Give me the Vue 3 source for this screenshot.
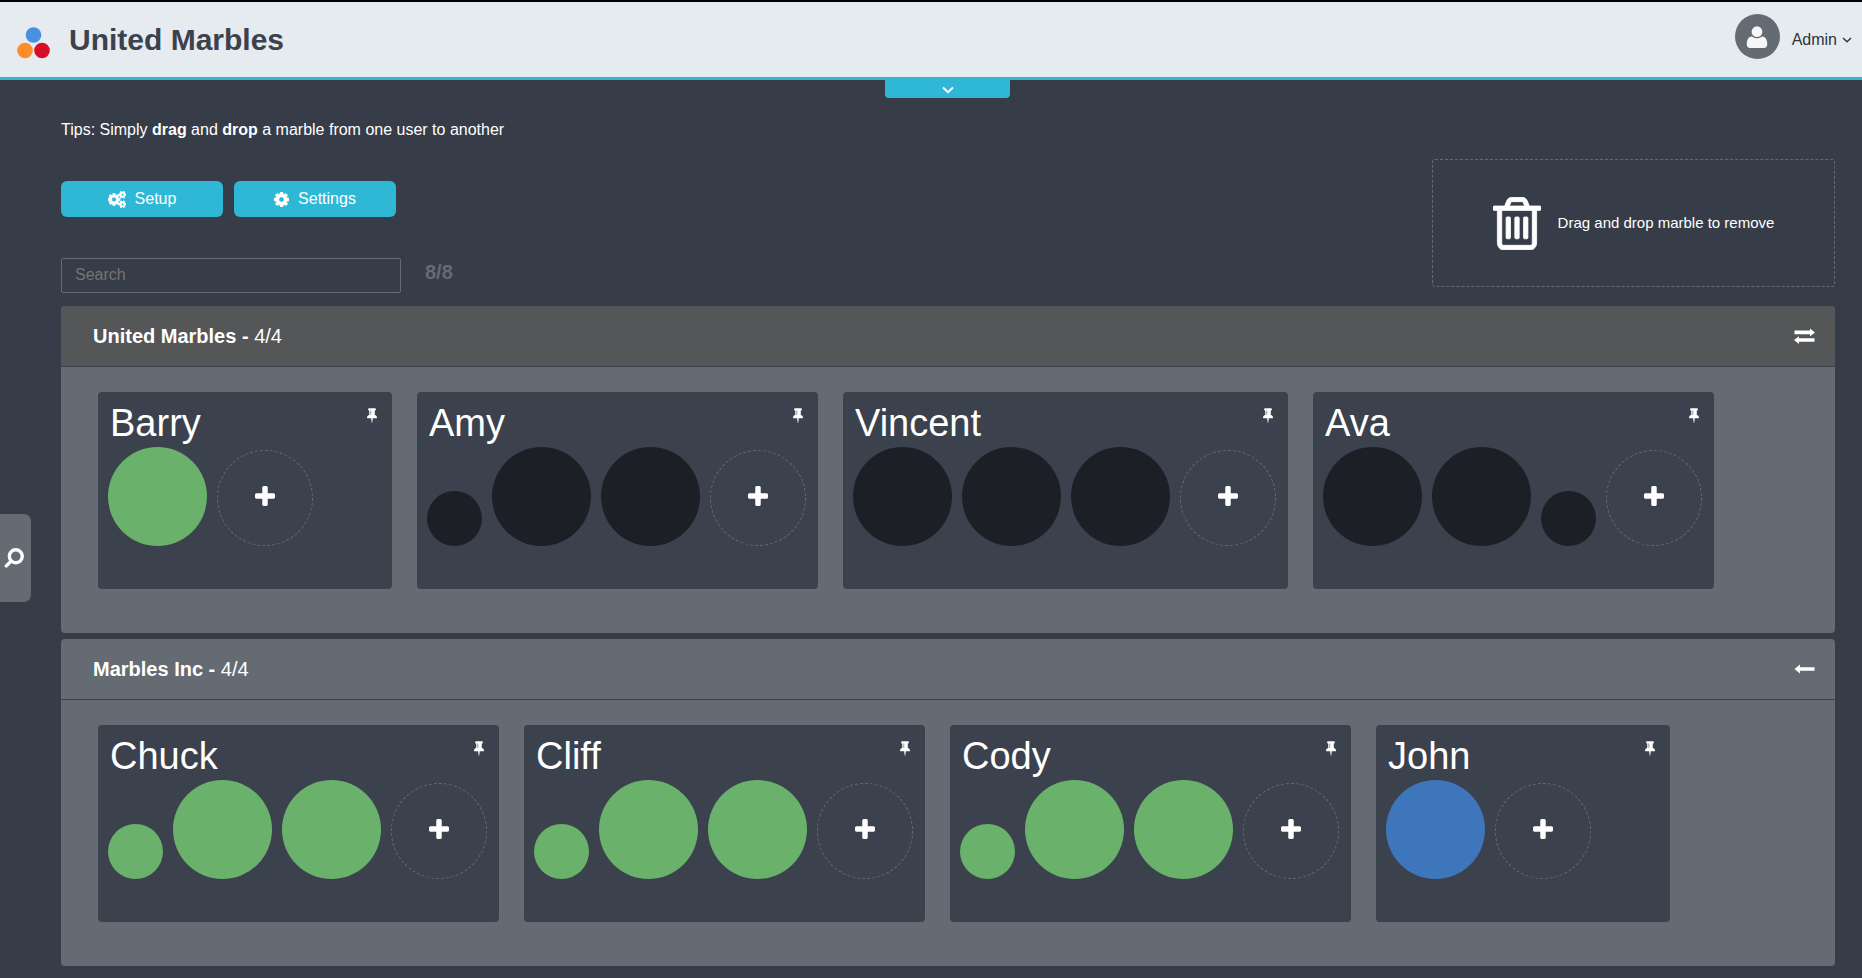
<script setup>
import { ref, computed } from 'vue'

const query = ref('')

const groups = [
  {
    name: 'United Marbles',
    own: true,
    members: [
      { name: 'Barry', marbles: ['green'] },
      { name: 'Amy', marbles: ['dark small', 'dark', 'dark'] },
      { name: 'Vincent', marbles: ['dark', 'dark', 'dark'] },
      { name: 'Ava', marbles: ['dark', 'dark', 'dark small'] },
    ],
  },
  {
    name: 'Marbles Inc',
    own: false,
    members: [
      { name: 'Chuck', marbles: ['green small', 'green', 'green'] },
      { name: 'Cliff', marbles: ['green small', 'green', 'green'] },
      { name: 'Cody', marbles: ['green small', 'green', 'green'] },
      { name: 'John', marbles: ['blue'] },
    ],
  },
]

const total = groups.reduce((n, g) => n + g.members.length, 0)

const visibleGroups = computed(() =>
  groups.map((g) => ({
    ...g,
    shown: g.members.filter((m) => m.name.toLowerCase().includes(query.value.toLowerCase())),
  }))
)
const visibleCount = computed(() => visibleGroups.value.reduce((n, g) => n + g.shown.length, 0))
</script>

<template>
  <div class="page">
    <header class="topbar">
      <svg class="logo" viewBox="0 0 34 38" aria-hidden="true">
        <circle cx="16.500" cy="14" r="7.800" fill="#4a90e2" />
        <circle cx="8" cy="29.500" r="7.800" fill="#ff8c2b" />
        <circle cx="25" cy="29.500" r="7.800" fill="#d50f29" />
      </svg>
      <h1>United Marbles</h1>
      <button class="account" type="button">
        <span class="avatar">
          <svg viewBox="0 0 22 22" aria-hidden="true">
            <path d="M6 10.400 Q11 14.200 16 10.400 C20 10.600 21.300 14.500 21.300 18 C21.300 20.400 20 22 17.800 22 H4.200 C2 22 0.700 20.400 0.700 18 C0.700 14.500 2 10.600 6 10.400 Z" />
            <circle cx="11" cy="5.700" r="5.400" />
          </svg>
        </span>
        <span>Admin</span>
        <svg class="caret" viewBox="0 0 10 6" aria-hidden="true"><path d="M1 1 L5 4.800 L9 1" /></svg>
      </button>
    </header>
    <button class="drawer" type="button" aria-label="Show more">
      <svg viewBox="0 0 12 8" aria-hidden="true"><path d="M1 1.500 L6 6.200 L11 1.500" /></svg>
    </button>

    <button class="side-search" type="button" aria-label="Open search">
      <svg viewBox="0 0 20 20" aria-hidden="true">
        <circle cx="11.800" cy="8.300" r="6.500" />
        <path d="M7.200 13 L2.300 17.900" />
      </svg>
    </button>

    <main>
      <section class="toolbar">
        <div>
          <p class="tips">Tips: Simply <b>drag</b> and <b>drop</b> a marble from one user to another</p>
          <div class="actions">
            <button class="action" type="button">
              <svg class="cogs" viewBox="0 0 1920 1792" aria-hidden="true"><path d="M896 896q0-106-75-181t-181-75-181 75-75 181 75 181 181 75 181-75 75-181zm768 512q0-52-38-90t-90-38-90 38-38 90q0 53 37.500 90.500t90.500 37.500 90.500-37.500 37.500-90.500zm0-1024q0-52-38-90t-90-38-90 38-38 90q0 53 37.500 90.500t90.500 37.500 90.500-37.500 37.500-90.500zm-384 421v185q0 10-7 19.500t-16 10.500l-155 24q-11 35-32 76 34 48 90 115 7 11 7 20 0 12-7 19-23 30-82.500 89.500t-78.500 59.500q-11 0-21-7l-115-90q-37 19-77 31-11 108-23 155-7 24-30 24h-186q-11 0-20-7.500t-10-17.500l-23-153q-34-10-75-31l-118 89q-7 7-20 7-11 0-21-8-144-133-144-160 0-9 7-19 10-14 41-53t47-61q-23-44-35-82l-152-24q-10-1-17-9.500t-7-19.500v-185q0-10 7-19.500t16-10.500l155-24q11-35 32-76-34-48-90-115-7-11-7-20 0-12 7-20 22-30 82-89t79-59q11 0 21 7l115 90q34-18 77-32 11-108 23-154 7-24 30-24h186q11 0 20 7.500t10 17.500l23 153q34 10 75 31l118-89q8-7 20-7 11 0 21 8 144 133 144 160 0 8-7 19-12 16-42 54t-45 60q23 48 34 82l152 23q10 2 17 10.500t7 19.500zm640 533v140q0 16-149 31-12 27-30 52 51 113 51 138 0 4-4 7-122 71-124 71-8 0-46-47t-52-68q-20 2-30 2t-30-2q-14 21-52 68t-46 47q-2 0-124-71-4-3-4-7 0-25 51-138-18-25-30-52-149-15-149-31v-140q0-16 149-31 13-29 30-52-51-113-51-138 0-4 4-7 4-2 35-20t59-34 30-16q8 0 46 46.500t52 67.500q20-2 30-2t30 2q51-71 92-112l6-2q4 0 124 70 4 3 4 7 0 25-51 138 17 23 30 52 149 15 149 31zm0-1024v140q0 16-149 31-12 27-30 52 51 113 51 138 0 4-4 7-122 71-124 71-8 0-46-47t-52-68q-20 2-30 2t-30-2q-14 21-52 68t-46 47q-2 0-124-71-4-3-4-7 0-25 51-138-18-25-30-52-149-15-149-31v-140q0-16 149-31 13-29 30-52-51-113-51-138 0-4 4-7 4-2 35-20t59-34 30-16q8 0 46 46.500t52 67.500q20-2 30-2t30 2q51-71 92-112l6-2q4 0 124 70 4 3 4 7 0 25-51 138 17 23 30 52 149 15 149 31z" /></svg>
              Setup
            </button>
            <button class="action" type="button">
              <svg class="cog" viewBox="128 128 1536 1536" aria-hidden="true"><path d="M1152 896q0-106-75-181t-181-75-181 75-75 181 75 181 181 75 181-75 75-181zm512-109v222q0 12-8 23t-20 13l-185 28q-19 54-39 91 35 50 107 138 10 12 10 25t-9 23q-27 37-99 108t-94 71q-12 0-26-9l-138-108q-44 23-91 38-16 136-29 186-7 28-36 28h-222q-14 0-24.500-8.500t-11.500-21.500l-28-184q-49-16-90-37l-141 107q-10 9-25 9-14 0-25-11-126-114-165-168-7-10-7-23 0-12 8-23 15-21 51-66.500t54-70.500q-27-50-41-99l-183-27q-13-2-21-12.500t-8-23.500v-222q0-12 8-23t19-13l186-28q14-46 39-92-40-57-107-138-10-12-10-24 0-10 9-23 26-36 98.500-107.500t94.500-71.500q13 0 26 10l138 107q44-23 91-38 16-136 29-186 7-28 36-28h222q14 0 24.500 8.500t11.500 21.500l28 184q49 16 90 37l142-107q9-9 24-9 13 0 25 10 129 119 165 170 7 8 7 22 0 12-8 23-15 21-51 66.500t-54 70.500q26 50 41 98l183 28q13 2 21 12.500t8 23.500z" /></svg>
              Settings
            </button>
          </div>
          <div class="filter">
            <input v-model="query" type="text" placeholder="Search" aria-label="Search" />
            <span class="count">{{ visibleCount }}/{{ total }}</span>
          </div>
        </div>
        <div class="dropzone">
          <svg viewBox="192 128 1408 1536" aria-hidden="true"><path d="M704 736v576q0 14-9 23t-23 9h-64q-14 0-23-9t-9-23v-576q0-14 9-23t23-9h64q14 0 23 9t9 23zm256 0v576q0 14-9 23t-23 9h-64q-14 0-23-9t-9-23v-576q0-14 9-23t23-9h64q14 0 23 9t9 23zm256 0v576q0 14-9 23t-23 9h-64q-14 0-23-9t-9-23v-576q0-14 9-23t23-9h64q14 0 23 9t9 23zm128 724v-948h-896v948q0 22 7 40.500t14.500 27 10.500 8.500h832q3 0 10.500-8.500t14.500-27 7-40.500zm-672-1076h448l-48-117q-7-9-17-11h-317q-10 2-17 11zm928 32v64q0 14-9 23t-23 9h-96v948q0 83-47 143.500t-113 60.500h-832q-66 0-113-58.500t-47-141.500v-952h-96q-14 0-23-9t-9-23v-64q0-14 9-23t23-9h309l70-167q15-37 54-63t79-26h320q40 0 79 26t54 63l70 167h309q14 0 23 9t9 23z" /></svg>
          <span>Drag and drop marble to remove</span>
        </div>
      </section>

      <section v-for="group in visibleGroups" :key="group.name" class="group">
        <header class="group-head" :class="{ own: group.own }">
          <h2>{{ group.name }} - <span>{{ group.shown.length }}/{{ group.members.length }}</span></h2>
          <button class="direction" type="button" :aria-label="'Transfers for ' + group.name">
            <svg v-if="group.own" viewBox="0 0 21 16" aria-hidden="true">
              <path d="M0.500 2.600 H16 V0.500 L21 4.500 L16 8.300 V6.200 H0.500 Z" />
              <path d="M20.500 10.200 H5 V8.200 L0 12 L5 16 V13.800 H20.500 Z" />
            </svg>
            <svg v-else viewBox="0 0 21 16" aria-hidden="true">
              <path d="M20.500 6.200 H6 V3.400 L0.500 8 L6 12.600 V9.800 H20.500 Z" />
            </svg>
          </button>
        </header>
        <div class="cards">
          <article v-for="member in group.shown" :key="member.name" class="card">
            <div class="card-head">
              <h3>{{ member.name }}</h3>
              <button class="pin" type="button" :aria-label="'Pin ' + member.name">
                <svg viewBox="320 128 1152 1664" aria-hidden="true"><path d="M800 864v-448q0-14-9-23t-23-9-23 9-9 23v448q0 14 9 23t23 9 23-9 9-23zm672 352q0 26-19 45t-45 19h-429l-51 483q-2 12-10.500 20.500t-20.500 8.500h-1q-27 0-32-27l-76-485h-404q-26 0-45-19t-19-45q0-123 78.500-221.500t177.500-98.500v-512q-52 0-90-38t-38-90 38-90 90-38h640q52 0 90 38t38 90-38 90-90 38v512q99 0 177.500 98.500t78.500 221.500z" /></svg>
              </button>
            </div>
            <div class="marbles">
              <div v-for="(marble, i) in member.marbles" :key="i" class="marble" :class="marble" draggable="true"></div>
              <button class="add" type="button" :aria-label="'Add marble to ' + member.name">
                <svg viewBox="192 128 1408 1408" aria-hidden="true"><path d="M1600 736v192q0 40-28 68t-68 28h-416v416q0 40-28 68t-68 28h-192q-40 0-68-28t-28-68v-416h-416q-40 0-68-28t-28-68v-192q0-40 28-68t68-28h416v-416q0-40 28-68t68-28h192q40 0 68 28t28 68v416h416q40 0 68 28t28 68z" /></svg>
              </button>
            </div>
          </article>
        </div>
      </section>
    </main>
  </div>
</template>

<style>
body {
  background: #363c48;
}
</style>

<style scoped>
.page {
  position: relative;
  min-height: 100vh;
  box-sizing: border-box;
  background: #363c48;
  color: #fff;
  font: 16px/24px Arial, "Liberation Sans", sans-serif;
}
.page * {
  box-sizing: border-box;
}
button {
  border: 0;
  padding: 0;
  background: none;
  color: inherit;
  font: inherit;
  cursor: pointer;
}
svg {
  display: block;
  fill: currentColor;
}
h1, h2, h3, p {
  margin: 0;
}

.topbar {
  display: flex;
  align-items: center;
  height: 80px;
  padding: 0 10px 0 17px;
  border-top: 2px solid #000;
  border-bottom: 3px solid #2eb8d6;
  background: #e5ebef;
  color: #3c424d;
}
.logo {
  width: 34px;
  height: 38px;
}
h1 {
  margin-left: 18px;
  font-size: 30px;
  line-height: 36px;
}
.account {
  display: flex;
  align-items: center;
  margin-left: auto;
  color: #2c3442;
}
.avatar {
  display: flex;
  align-items: center;
  justify-content: center;
  width: 45px;
  height: 45px;
  margin: 0 12px 6px 0;
  border-radius: 50%;
  background: #656b73;
  color: #f5f7f8;
}
.avatar svg {
  width: 22px;
  height: 22px;
}
.caret {
  width: 10px;
  height: 6px;
  margin-left: 5px;
}
.caret path,
.drawer path {
  fill: none;
  stroke: currentColor;
  stroke-width: 1.400;
}
.drawer path {
  stroke-width: 2;
}
.drawer {
  position: absolute;
  top: 80px;
  left: calc(50% - 46px);
  display: flex;
  align-items: center;
  justify-content: center;
  width: 125px;
  height: 18px;
  border-radius: 0 0 4px 4px;
  background: #2eb8d6;
}
.drawer svg {
  width: 12px;
  height: 8px;
  margin-top: 2px;
}
.side-search {
  position: absolute;
  top: 514px;
  left: 0;
  display: flex;
  align-items: center;
  width: 31px;
  height: 88px;
  padding-left: 4px;
  border-radius: 0 7px 7px 0;
  background: #656b73;
}
.side-search svg {
  width: 20px;
  height: 20px;
  fill: none;
  stroke: currentColor;
  stroke-width: 3.400;
  stroke-linecap: round;
}

main {
  padding: 38px 27px 12px 61px;
}
.toolbar {
  display: flex;
  align-items: flex-end;
  justify-content: space-between;
  margin-bottom: 13px;
}
.actions {
  display: flex;
  gap: 11px;
  margin-top: 39px;
}
.action {
  display: flex;
  align-items: center;
  justify-content: center;
  gap: 9px;
  width: 162px;
  height: 36px;
  border-radius: 6px;
  background: #2eb8d6;
}
.cogs {
  width: 18px;
  height: 17px;
  stroke: currentColor;
  stroke-width: 90;
}
.cog {
  width: 15px;
  height: 15px;
  stroke: currentColor;
  stroke-width: 40;
}
.filter {
  display: flex;
  gap: 24px;
  margin-top: 41px;
}
.filter input {
  width: 340px;
  height: 35px;
  padding: 0 13px 2px;
  border: 1px solid #656b73;
  border-radius: 2px;
  outline: 0;
  background: transparent;
  color: #fff;
  font: inherit;
}
.filter input::placeholder {
  color: #757575;
  opacity: 1;
}
.count {
  padding-top: 2px;
  color: #656b73;
  font-size: 20px;
  font-weight: bold;
}
.dropzone {
  display: flex;
  align-items: center;
  justify-content: center;
  gap: 17px;
  width: 403px;
  height: 128px;
  margin-bottom: 6px;
  border: 1px dashed #656b73;
  border-radius: 3px;
  font-size: 15px;
}
.dropzone svg {
  width: 48px;
  height: 53px;
  stroke: currentColor;
  stroke-width: 24;
}

.group {
  border-radius: 4px;
  background: #656b73;
  overflow: hidden;
}
.group + .group {
  margin-top: 6px;
}
.group-head {
  display: flex;
  align-items: center;
  justify-content: space-between;
  height: 61px;
  padding: 0 20px 0 32px;
  border-bottom: 1px solid #3c424d;
}
.group-head.own {
  background: #555657;
}
h2 {
  font-size: 20px;
  line-height: 24px;
}
h2 span {
  font-weight: normal;
}
.direction svg {
  width: 21px;
  height: 16px;
}
.cards {
  display: flex;
  flex-wrap: wrap;
  gap: 25px;
  padding: 25px 37px 44px;
}
.card {
  min-width: 294px;
  height: 197px;
  padding: 10px 12px 0 10px;
  border-radius: 4px;
  background: #3b424d;
}
.card-head {
  display: flex;
  align-items: flex-start;
  justify-content: space-between;
  height: 45px;
  padding: 0 3px 0 2px;
}
h3 {
  font-size: 38px;
  font-weight: normal;
  line-height: 42px;
}
.pin {
  padding-top: 6px;
}
.pin svg {
  width: 10px;
  height: 15px;
}
.marbles {
  display: flex;
  align-items: flex-end;
  gap: 10px;
}
.marble {
  width: 99px;
  height: 99px;
  border-radius: 50%;
}
.small {
  width: 55px;
  height: 55px;
}
.green {
  background: #6ab16b;
}
.dark {
  background: #1d1f27;
}
.blue {
  background: #3d76bb;
}
.add {
  display: flex;
  align-items: center;
  justify-content: center;
  width: 96px;
  height: 96px;
  padding-bottom: 4px;
  border: 1px dashed #656b73;
  border-radius: 50%;
}
.add svg {
  width: 20px;
  height: 20px;
}
</style>
